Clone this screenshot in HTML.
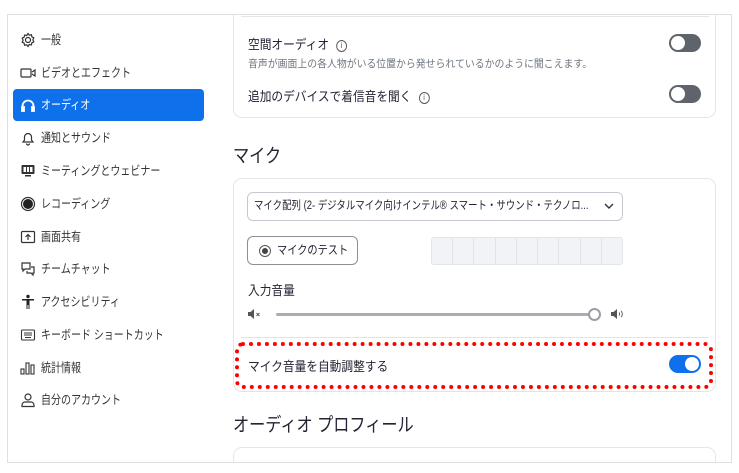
<!DOCTYPE html>
<html><head><meta charset="utf-8"><style>
*{box-sizing:border-box;margin:0;padding:0}
html,body{width:739px;height:473px;overflow:hidden}
body{background:#fff;position:relative;font-family:"Liberation Sans","Noto Sans CJK JP",sans-serif;color:#232333}
.frame{position:absolute;left:7px;top:14px;width:725px;height:449px;border:1px solid #e0e0e0;overflow:hidden}
.abs{position:absolute;white-space:nowrap}
.nav{position:absolute;left:33px;font-size:12.5px;line-height:16px;color:#333;white-space:nowrap;transform-origin:0 50%;transform:scaleX(0.8)}
.ic{position:absolute;left:12px;width:16px;height:16px}
.card{position:absolute;left:225px;width:483px;border:1px solid #e3e5ea;border-radius:9px;background:#fff}
.tog{position:absolute;width:32px;height:18px;border-radius:9px;background:#5f636b}
.tog::after{content:"";position:absolute;top:2px;left:2px;width:14px;height:14px;border-radius:50%;background:#fff}
.tog.on{background:#0e71eb}.tog.on::after{left:16px}
.t13{font-size:13px;color:#232333;transform-origin:0 50%;transform:scaleX(0.9)}
.info{display:inline-block;width:12px;height:12px;border:1px solid #555;border-radius:50%;font-size:8px;line-height:10px;text-align:center;margin-left:8px;vertical-align:1px;color:#555}
</style></head><body>
<div class="frame">
<div class="abs" style="left:5px;top:74px;width:191px;height:32px;background:#0e71eb;border-radius:4px"></div>
<svg class="ic" style="top:17px" viewBox="0 0 16 16" fill="none" stroke="#333" stroke-width="1.2"><circle cx="8" cy="8" r="2.5"/><path d="M8 1.5l1.3 1.7 2.1-.5.5 2.1 1.9 1-.9 2 .9 2-1.9 1-.5 2.1-2.1-.5L8 14.5l-1.3-1.7-2.1.5-.5-2.1-1.9-1 .9-2-.9-2 1.9-1 .5-2.1 2.1.5z"/></svg>
<div class="nav" style="top:17px">一般</div>
<svg class="ic" style="top:50px" viewBox="0 0 16 16" fill="none" stroke="#333" stroke-width="1.2"><rect x="1" y="4" width="10" height="8" rx="1"/><path d="M12 7l3-2v6l-3-2"/></svg>
<div class="nav" style="top:50px">ビデオとエフェクト</div>
<svg class="ic" style="top:82px" viewBox="0 0 16 16" fill="none" stroke="#fff" stroke-width="1.8"><path d="M2.5 13V9a5.5 5.5 0 0111 0v4"/><rect x="2" y="10" width="2" height="4" fill="#fff"/><rect x="12" y="10" width="2" height="4" fill="#fff"/></svg>
<div class="nav" style="top:82px;color:#fff">オーディオ</div>
<svg class="ic" style="top:115px" viewBox="0 0 16 16" fill="none" stroke="#333" stroke-width="1.2"><path d="M3 12h10l-1.5-2V7a3.5 3.5 0 00-7 0v3z"/><path d="M6.5 13.5a1.5 1.5 0 003 0"/></svg>
<div class="nav" style="top:115px">通知とサウンド</div>
<svg class="ic" style="top:148px" viewBox="0 0 16 16"><rect x="1.5" y="2" width="13" height="9" rx="1" fill="#333"/><rect x="3.5" y="4" width="9" height="5" fill="#fff"/><rect x="6" y="4" width="1" height="5" fill="#333"/><rect x="9" y="4" width="1" height="5" fill="#333"/><rect x="5" y="12" width="6" height="1.5" fill="#333"/></svg>
<div class="nav" style="top:148px">ミーティングとウェビナー</div>
<svg class="ic" style="top:181px" viewBox="0 0 16 16"><circle cx="8" cy="8" r="6.5" fill="none" stroke="#333" stroke-width="1.2"/><circle cx="8" cy="8" r="5" fill="#222"/></svg>
<div class="nav" style="top:181px">レコーディング</div>
<svg class="ic" style="top:214px" viewBox="0 0 16 16" fill="none" stroke="#333" stroke-width="1.2"><rect x="1.5" y="2.5" width="13" height="11" rx="1"/><path d="M8 11V5.5M5.5 8L8 5.5 10.5 8"/></svg>
<div class="nav" style="top:214px">画面共有</div>
<svg class="ic" style="top:246px" viewBox="0 0 16 16" fill="none" stroke="#333" stroke-width="1.2"><path d="M2 2h8v6H5l-2 2V8H2z"/><path d="M11 6h3v6h-1v2l-2-2H7v-2"/></svg>
<div class="nav" style="top:246px">チームチャット</div>
<svg class="ic" style="top:279px" viewBox="0 0 16 16" fill="#222"><circle cx="8" cy="2.5" r="1.7"/><path d="M2 5h12v1.5H9.5V15H8.5v-4h-1v4H6.5V6.5H2z"/></svg>
<div class="nav" style="top:279px">アクセシビリティ</div>
<svg class="ic" style="top:312px" viewBox="0 0 16 16" fill="none" stroke="#333" stroke-width="1.1"><rect x="1.5" y="3" width="13" height="10" rx="1"/><path d="M4 6h8M4 8h8M5 10.5h6"/></svg>
<div class="nav" style="top:312px">キーボード ショートカット</div>
<svg class="ic" style="top:345px" viewBox="0 0 16 16" fill="none" stroke="#333" stroke-width="1.1"><rect x="1" y="9" width="3" height="5"/><rect x="6" y="3" width="3" height="11"/><rect x="11" y="5" width="3" height="9"/></svg>
<div class="nav" style="top:345px">統計情報</div>
<svg class="ic" style="top:377px" viewBox="0 0 16 16" fill="none" stroke="#333" stroke-width="1.2"><circle cx="8" cy="5" r="3"/><path d="M2 14.5v-1.5a3 3 0 013-3h6a3 3 0 013 3v1.5z"/></svg>
<div class="nav" style="top:377px">自分のアカウント</div>

<div class="card" style="top:-20px;height:123px">
  <div class="abs" style="left:7px;top:20px;width:468px;height:1px;background:#e3e5ea"></div>
  <div class="abs t13" style="left:14px;top:38px">空間オーディオ<span class="info">i</span></div>
  <div class="abs" style="left:14px;top:60px;font-size:10.5px;color:#6e7680;transform-origin:0 50%;transform:scaleX(0.94)">音声が画面上の各人物がいる位置から発せられているかのように聞こえます。</div>
  <div class="tog" style="left:435px;top:38px"></div>
  <div class="abs t13" style="left:14px;top:90px">追加のデバイスで着信音を聞く<span class="info">i</span></div>
  <div class="tog" style="left:435px;top:89px"></div>
</div>
<div class="abs" style="left:225px;top:126px;font-size:19px;color:#232333;transform-origin:0 50%;transform:scaleX(0.85)">マイク</div>

<div class="card" style="top:163px;height:214px">
  <div class="abs" style="left:13px;top:13px;width:376px;height:29px;border:1px solid #c5c8d0;border-radius:6px;">
    <div class="abs" style="left:6px;top:0;font-size:11.5px;line-height:27px;color:#232333;transform-origin:0 50%;transform:scaleX(0.82)">マイク配列 (2- デジタルマイク向けインテル® スマート・サウンド・テクノロ...</div>
    <svg style="position:absolute;right:8px;top:10px" width="10" height="7" viewBox="0 0 10 7" fill="none" stroke="#333" stroke-width="1.4"><path d="M1 1l4 4 4-4"/></svg>
  </div>
  <div class="abs" style="left:13px;top:57px;width:111px;height:29px;border:1px solid #8c8f95;border-radius:6px;">
    <span style="position:absolute;left:11px;top:8px;width:12px;height:12px;border:1.5px solid #555;border-radius:50%"><span style="position:absolute;left:1.5px;top:1.5px;width:6px;height:6px;border-radius:50%;background:#444"></span></span>
    <div class="abs" style="left:29px;top:0;font-size:12px;line-height:27px;color:#232333;transform-origin:0 50%;transform:scaleX(0.85)">マイクのテスト</div>
  </div>
  <div class="abs" style="left:197px;top:58px;width:192px;height:28px;border:1px solid #e3e5ea;border-radius:3px;background:#f1f3f6;display:flex">
    <div style="flex:1;border-right:1px solid #dfe2e7"></div><div style="flex:1;border-right:1px solid #dfe2e7"></div><div style="flex:1;border-right:1px solid #dfe2e7"></div><div style="flex:1;border-right:1px solid #dfe2e7"></div><div style="flex:1;border-right:1px solid #dfe2e7"></div><div style="flex:1;border-right:1px solid #dfe2e7"></div><div style="flex:1;border-right:1px solid #dfe2e7"></div><div style="flex:1;border-right:1px solid #dfe2e7"></div><div style="flex:1"></div>
  </div>
  <div class="abs t13" style="left:14px;top:101px">入力音量</div>
  <svg class="abs" style="left:14px;top:130px" width="14" height="10" viewBox="0 0 14 10"><path d="M0 3h2.5L6 0v10L2.5 7H0z" fill="#555"/><path d="M8.5 4l3 3M11.5 4l-3 3" stroke="#555" stroke-width=".9"/></svg>
  <div class="abs" style="left:42px;top:134px;width:318px;height:3px;background:#a9adb4;border-radius:2px"></div>
  <div class="abs" style="left:354px;top:129px;width:13px;height:13px;border:2px solid #9a9ea5;border-radius:50%;background:#fff"></div>
  <svg class="abs" style="left:377px;top:130px" width="14" height="10" viewBox="0 0 14 10"><path d="M0 3h2.5L6 0v10L2.5 7H0z" fill="#555"/><path d="M8 3.5a2 2 0 010 3M10 2a4 4 0 010 6" stroke="#555" stroke-width=".9" fill="none"/></svg>
  <div class="abs" style="left:7px;top:158px;width:468px;height:1px;background:#e3e5ea"></div>
  <div class="abs t13" style="left:14px;top:177px">マイク音量を自動調整する</div>
  <div class="tog on" style="left:435px;top:176px"></div>
</div>
<div class="abs" style="left:227px;top:327px;width:478px;height:47px;border:4px dotted #f00;border-radius:8px"></div>
<div class="abs" style="left:225px;top:395px;font-size:19px;color:#232333;transform-origin:0 50%;transform:scaleX(0.85)">オーディオ プロフィール</div>
<div class="card" style="top:432px;height:30px"></div>
</div>
</body></html>
